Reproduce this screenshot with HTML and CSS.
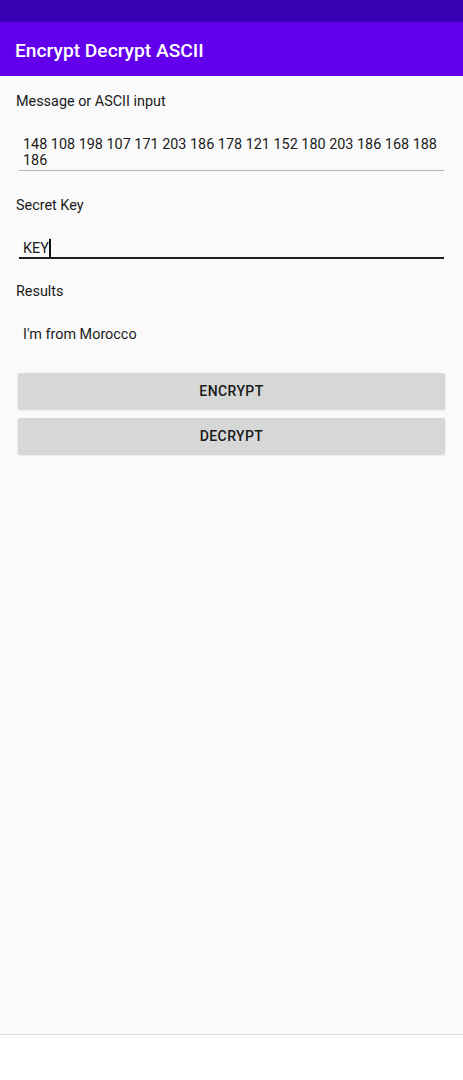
FILE: index.html
```html
<!DOCTYPE html>
<html lang="en">

<head>
    <meta charset="UTF-8">
    <meta name="viewport" content="width=device-width, initial-scale=1.0">
    <title>Encrypt Decrypt ASCII</title>
    <link rel="stylesheet" href="styles.css">
</head>

<body>
    <div class="status-bar"></div>
    <header class="app-bar">Encrypt Decrypt ASCII</header>

    <main class="content">
        <div class="label">Message or ASCII input</div>
        <div class="field field-message">148 108 198 107 171 203 186 178 121 152 180 203 186 168 188 186</div>

        <div class="label label-key">Secret Key</div>
        <div class="field field-key">KEY<span class="cursor"></span></div>

        <div class="label label-results">Results</div>
        <div class="result">I'm from Morocco</div>

        <button class="btn btn-encrypt">ENCRYPT</button>
        <button class="btn btn-decrypt">DECRYPT</button>
    </main>

    <footer class="nav-bar"></footer>
</body>

</html>
```

FILE: styles.css
```css
html,
body {
    margin: 0;
    padding: 0;
}

body {
    font-family: 'Roboto', 'Liberation Sans', sans-serif;
    background-color: #fafafa;
    color: #1a1a1a;
    height: 1080px;
    display: flex;
    flex-direction: column;
}

.status-bar {
    height: 22px;
    background-color: #3700b3;
}

.app-bar {
    height: 50px;
    padding: 4px 0 0 15px;
    line-height: 50px;
    background-color: #6200ee;
    color: #fff;
    font-size: 19.2px;
    font-weight: 500;
}

.content {
    flex: 1;
    padding: 16px 16px 0;
    display: flex;
    flex-direction: column;
}

.label {
    font-size: 14.4px;
    line-height: 20px;
}

.label-key {
    margin-top: 25px;
}

.label-results {
    margin-top: 23px;
}

.field {
    margin: 0 3px;
    padding: 25px 4px 1px;
    font-size: 14.4px;
    line-height: 16px;
    border-bottom: 1px solid #b4b4b4;
}

.field-key {
    padding-top: 24px;
    padding-bottom: 0;
    border-bottom: 2px solid #1e1e1e;
}

/* text cursor, scaled so it doesn't grow the line box */
.cursor {
    display: inline-block;
    width: 2px;
    height: 16px;
    background-color: #111;
    vertical-align: -3px;
    transform: scaleY(1.15);
}

.result {
    margin-top: 23px;
    padding-left: 7px;
    font-size: 14.4px;
    line-height: 20px;
}

.btn {
    margin: 0 2px;
    height: 36px;
    border: none;
    border-radius: 2px;
    background-color: #d6d7d7;
    box-shadow: 0 1px 2px rgba(0, 0, 0, 0.18);
    font-family: 'Roboto', 'Liberation Sans', sans-serif;
    font-size: 14px;
    font-weight: 500;
    letter-spacing: 0.4px;
    color: #1a1a1a;
}

.btn-encrypt {
    margin-top: 28px;
}

.btn-decrypt {
    margin-top: 9px;
}

.nav-bar {
    height: 45px;
    background-color: #fff;
    border-top: 1px solid #dcdcdc;
}
```
